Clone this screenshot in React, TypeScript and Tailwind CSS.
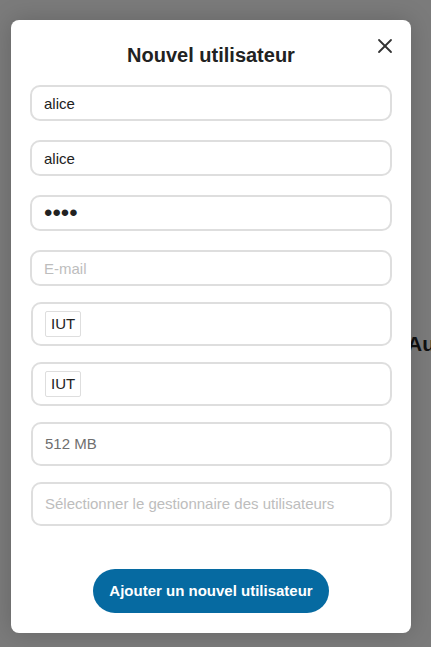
import { X } from 'lucide-react';

const fieldClass =
  'h-9 w-full rounded-[10px] border-2 border-[#dedede] bg-white px-[12px] text-[15px] text-[#222] outline-none placeholder:text-[#bdbdbd]';

const boxClass = 'flex h-11 w-full items-center rounded-[10px] border-2 border-[#dedede] bg-white px-[12px]';

const App: React.FC = () => {
  return (
    <div className="relative h-[647px] w-[431px] overflow-hidden bg-[#7b7b7b] font-['Liberation_Sans',Arial,sans-serif]">
      {/* page behind the overlay */}
      <div className="absolute left-[407px] top-[328px] whitespace-nowrap text-[21px] font-bold text-[#111]">Au</div>

      <div className="relative z-10 pl-[11px] pt-5">
        <div className="relative flex h-[613px] w-[400px] flex-col rounded-lg bg-white px-[19px] shadow-[0_0_24px_rgba(0,0,0,0.18)]">
          <button className="absolute right-[14px] top-[14px] text-[#333]">
            <X size={24} strokeWidth={1.8} />
          </button>
          <h2 className="mt-[23px] text-center text-[20px] font-bold leading-6 text-[#222]">Nouvel utilisateur</h2>

          <div className="mt-[18px] flex flex-col gap-[19px]">
            <input className={fieldClass} defaultValue="alice" />
            <input className={fieldClass} defaultValue="alice" />
            <input className={`${fieldClass} text-[24px]`} type="password" defaultValue="abcd" />
            <input className={fieldClass} placeholder="E-mail" />
          </div>

          <div className="mt-4 flex flex-col gap-4 pl-px">
            <div className={boxClass}>
              <span className="rounded-[2px] border border-[#dedede] px-[5px] py-[3px] text-[15px] leading-[18px] text-[#222]">IUT</span>
            </div>
            <div className={boxClass}>
              <span className="rounded-[2px] border border-[#dedede] px-[5px] py-[3px] text-[15px] leading-[18px] text-[#222]">IUT</span>
            </div>
            <div className={boxClass}>
              <span className="text-[15px] text-[#6f6f6f]">512 MB</span>
            </div>
            <div className={boxClass}>
              <span className="text-[15px] text-[#bdbdbd]">Sélectionner le gestionnaire des utilisateurs</span>
            </div>
          </div>

          <div className="mt-[43px] flex justify-center">
            <button className="h-11 w-[236px] rounded-full bg-[#066aa1] text-[15px] font-bold text-white">
              Ajouter un nouvel utilisateur
            </button>
          </div>
        </div>
      </div>
    </div>
  );
};

export default App;
